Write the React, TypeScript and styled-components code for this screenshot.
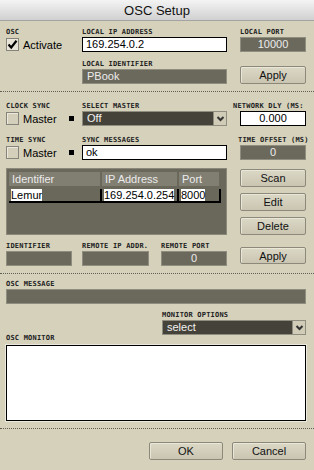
import React from "react";
import styled, { createGlobalStyle } from "styled-components";

const GlobalStyle = createGlobalStyle`
  *, *::before, *::after { box-sizing: border-box; }
  html, body { margin: 0; padding: 0; background: #d5d1bb; }
  body { font-family: "Liberation Sans", Arial, sans-serif; font-size: 11px; color: #000; }
`;

const Window = styled.div`
  width: 314px;
  height: 470px;
  background: #d5d1bb;
  display: flex;
  flex-direction: column;
  overflow: hidden;
`;

const TitleBar = styled.div`
  height: 21px;
  flex-shrink: 0;
  background: linear-gradient(#f4f4f4, #d0d0d0);
  border-bottom: 1px solid #a3a3a3;
  display: flex;
  align-items: center;
  justify-content: center;
  font-size: 13px;
  color: #111;
`;

const Body = styled.div`
  padding: 0 8px 0 6px;
  display: flex;
  flex-direction: column;
`;

const Row = styled.div<{ $mt?: number; $end?: boolean }>`
  display: flex;
  margin-top: ${(p) => p.$mt ?? 0}px;
  align-items: ${(p) => (p.$end ? "flex-end" : "flex-start")};
`;

const Col = styled.div<{ $w: number; $ml?: number }>`
  width: ${(p) => p.$w}px;
  margin-left: ${(p) => p.$ml ?? 0}px;
  flex-shrink: 0;
  display: flex;
  flex-direction: column;
`;

const Label = styled.div<{ $shift?: number }>`
  height: 10px;
  line-height: 10px;
  font-family: "DejaVu Sans Mono", monospace;
  font-weight: bold;
  font-size: 7px;
  letter-spacing: 0.2px;
  color: #222;
  white-space: nowrap;
  margin-left: ${(p) => p.$shift ?? 0}px;
`;

const Separator = styled.div<{ $mt: number }>`
  margin: ${(p) => p.$mt}px -8px 0 -6px;
  border-top: 1px dotted #5e5c54;
`;

const WhiteField = styled.div<{ $w?: number; $center?: boolean }>`
  width: ${(p) => (p.$w ? `${p.$w}px` : "100%")};
  height: 15px;
  background: #fff;
  border: 1px solid #000;
  padding: 0 3px;
  line-height: 13px;
  text-align: ${(p) => (p.$center ? "center" : "left")};
  white-space: nowrap;
  overflow: hidden;
`;

const DarkField = styled.div<{ $w?: number; $center?: boolean }>`
  width: ${(p) => (p.$w ? `${p.$w}px` : "100%")};
  height: 15px;
  background: #6b685c;
  border: 1px solid #8f8c80;
  color: #ececec;
  padding: 0 4px;
  line-height: 13px;
  text-align: ${(p) => (p.$center ? "center" : "left")};
  white-space: nowrap;
`;

const Button = styled.div<{ $w?: number; $h?: number; $mt?: number }>`
  width: ${(p) => (p.$w ? `${p.$w}px` : "100%")};
  height: ${(p) => p.$h ?? 18}px;
  margin-top: ${(p) => p.$mt ?? 0}px;
  background: linear-gradient(#dcd8c6, #c9c5b1);
  border: 1px solid #8c897c;
  border-radius: 2px;
  box-shadow: inset 1px 1px 0 #ebe7d6;
  display: flex;
  align-items: center;
  justify-content: center;
  color: #111;
  flex-shrink: 0;
`;

const CheckRow = styled.div`
  height: 15px;
  display: flex;
  align-items: center;
  gap: 4px;
`;

const Box = styled.div<{ $checked?: boolean }>`
  width: 13px;
  height: 13px;
  border: 1px solid #86837a;
  background: ${(p) => (p.$checked ? "#e6e3d6" : "#d3cfba")};
  box-shadow: inset 1px 1px 0 #ece9dc;
  display: flex;
  align-items: center;
  justify-content: center;
`;

const Dot = styled.div`
  width: 5px;
  height: 5px;
  background: #000;
  margin-left: auto;
  margin-right: 8px;
`;

const Select = styled.div<{ $w?: number }>`
  width: ${(p) => (p.$w ? `${p.$w}px` : "100%")};
  height: 15px;
  display: flex;
  background: #45423a;
  border: 1px solid #8f8c80;
  color: #f2f2f2;
`;

const SelectText = styled.div`
  flex: 1;
  padding: 0 4px;
  line-height: 13px;
`;

const SelectArrow = styled.div`
  width: 13px;
  background: #d0ccb7;
  border-left: 1px solid #8f8c80;
  display: flex;
  align-items: center;
  justify-content: center;
`;

const TablePanel = styled.div`
  width: 221px;
  height: 67px;
  background: #6a675b;
  border: 1px solid #8c897c;
  padding: 3px 2px;
  display: flex;
  flex-direction: column;
  gap: 3px;
`;

const TableRow = styled.div`
  display: grid;
  grid-template-columns: 93px 77px 42px;
  height: 14px;
`;

const HeadCell = styled.div`
  margin-right: 2px;
  background: #817e72;
  color: #ececec;
  padding: 0 3px;
  line-height: 14px;
`;

const DataCell = styled.div`
  border-right: 2px solid #000;
  border-bottom: 2px solid #000;
  padding: 0 3px 0 2px;
  line-height: 12px;
  white-space: nowrap;
  overflow: hidden;
`;

const Hl = styled.span`
  background: #fff;
  color: #000;
`;

const ButtonStack = styled.div`
  width: 66px;
  margin-left: 13px;
  margin-top: 1px;
  display: flex;
  flex-direction: column;
  gap: 6px;
`;

const Spacer = styled.div<{ $h: number }>`
  height: ${(p) => p.$h}px;
`;

const Monitor = styled.div`
  margin-top: 2px;
  height: 76px;
  background: #fff;
  border: 1px solid #000;
  box-shadow: 0 0 0 1px #ebe8dc;
`;

const Footer = styled.div`
  margin-top: 13px;
  display: flex;
  justify-content: flex-end;
  gap: 9px;
`;

const Check = () => (
  <svg width="11" height="11" viewBox="0 0 11 11">
    <path d="M1.5 5.5 L4.2 8.5 L9.5 1.8" fill="none" stroke="#000" strokeWidth="2.2" />
  </svg>
);

const Chevron = () => (
  <svg width="9" height="7" viewBox="0 0 9 7">
    <path d="M1.5 2 L4.5 5 L7.5 2" fill="none" stroke="#333" strokeWidth="2" />
  </svg>
);

const SyncRow = ({ title, label, children, side }: { title: string; label: string; children: React.ReactNode; side: React.ReactNode }) => (
  <>
    <Col $w={76}>
      <Label>{title}</Label>
      <CheckRow>
        <Box />
        <span>Master</span>
        <Dot />
      </CheckRow>
    </Col>
    <Col $w={158}>
      <Label>{label}</Label>
      {children}
    </Col>
    <Col $w={66}>{side}</Col>
  </>
);

export default function App() {
  return (
    <Window>
      <GlobalStyle />
      <TitleBar>OSC Setup</TitleBar>
      <Body>
        <Row $mt={6}>
          <Col $w={76}>
            <Label>OSC</Label>
            <CheckRow>
              <Box $checked>
                <Check />
              </Box>
              <span>Activate</span>
            </CheckRow>
          </Col>
          <Col $w={158}>
            <Label>LOCAL IP ADDRESS</Label>
            <WhiteField $w={145}>169.254.0.2</WhiteField>
          </Col>
          <Col $w={66}>
            <Label>LOCAL PORT</Label>
            <DarkField $center>10000</DarkField>
          </Col>
        </Row>
        <Row $mt={7} $end>
          <Col $w={76} />
          <Col $w={158}>
            <Label>LOCAL IDENTIFIER</Label>
            <DarkField $w={145}>PBook</DarkField>
          </Col>
          <Col $w={66}>
            <Button>Apply</Button>
          </Col>
        </Row>

        <Separator $mt={7} />

        <Row $mt={9}>
          <SyncRow
            title="CLOCK SYNC"
            label="SELECT MASTER"
            side={
              <>
                <Label $shift={-7}>NETWORK DLY (MS:</Label>
                <WhiteField $center>0.000</WhiteField>
              </>
            }
          >
            <Select $w={145}>
              <SelectText>Off</SelectText>
              <SelectArrow>
                <Chevron />
              </SelectArrow>
            </Select>
          </SyncRow>
        </Row>
        <Row $mt={9}>
          <SyncRow
            title="TIME SYNC"
            label="SYNC MESSAGES"
            side={
              <>
                <Label $shift={-2}>TIME OFFSET (MS)</Label>
                <DarkField $center>0</DarkField>
              </>
            }
          >
            <WhiteField $w={145}>ok</WhiteField>
          </SyncRow>
        </Row>

        <Row $mt={8}>
          <TablePanel>
            <TableRow>
              <HeadCell>Identifier</HeadCell>
              <HeadCell>IP Address</HeadCell>
              <HeadCell>Port</HeadCell>
            </TableRow>
            <TableRow>
              <DataCell>
                <Hl>Lemur</Hl>
              </DataCell>
              <DataCell>
                <Hl>169.254.0.254</Hl>
              </DataCell>
              <DataCell>
                <Hl>8000</Hl>
              </DataCell>
            </TableRow>
          </TablePanel>
          <ButtonStack>
            <Button>Scan</Button>
            <Button>Edit</Button>
            <Button>Delete</Button>
          </ButtonStack>
        </Row>

        <Row $mt={6}>
          <Col $w={76}>
            <Label>IDENTIFIER</Label>
            <DarkField $w={66} />
          </Col>
          <Col $w={79}>
            <Label>REMOTE IP ADDR.</Label>
            <DarkField $w={67} />
          </Col>
          <Col $w={79}>
            <Label>REMOTE PORT</Label>
            <DarkField $w={66} $center>0</DarkField>
          </Col>
          <Col $w={66}>
            <Button $h={17} $mt={6}>Apply</Button>
          </Col>
        </Row>

        <Separator $mt={7} />

        <Row $mt={5}>
          <Col $w={300}>
            <Label>OSC MESSAGE</Label>
            <DarkField />
          </Col>
        </Row>

        <Row $mt={6} $end>
          <Col $w={156}>
            <Label>OSC MONITOR</Label>
          </Col>
          <Col $w={144}>
            <Label>MONITOR OPTIONS</Label>
            <Select>
              <SelectText>select</SelectText>
              <SelectArrow>
                <Chevron />
              </SelectArrow>
            </Select>
            <Spacer $h={8} />
          </Col>
        </Row>
        <Monitor />

        <Separator $mt={7} />

        <Footer>
          <Button $w={74}>OK</Button>
          <Button $w={74}>Cancel</Button>
        </Footer>
      </Body>
    </Window>
  );
}
